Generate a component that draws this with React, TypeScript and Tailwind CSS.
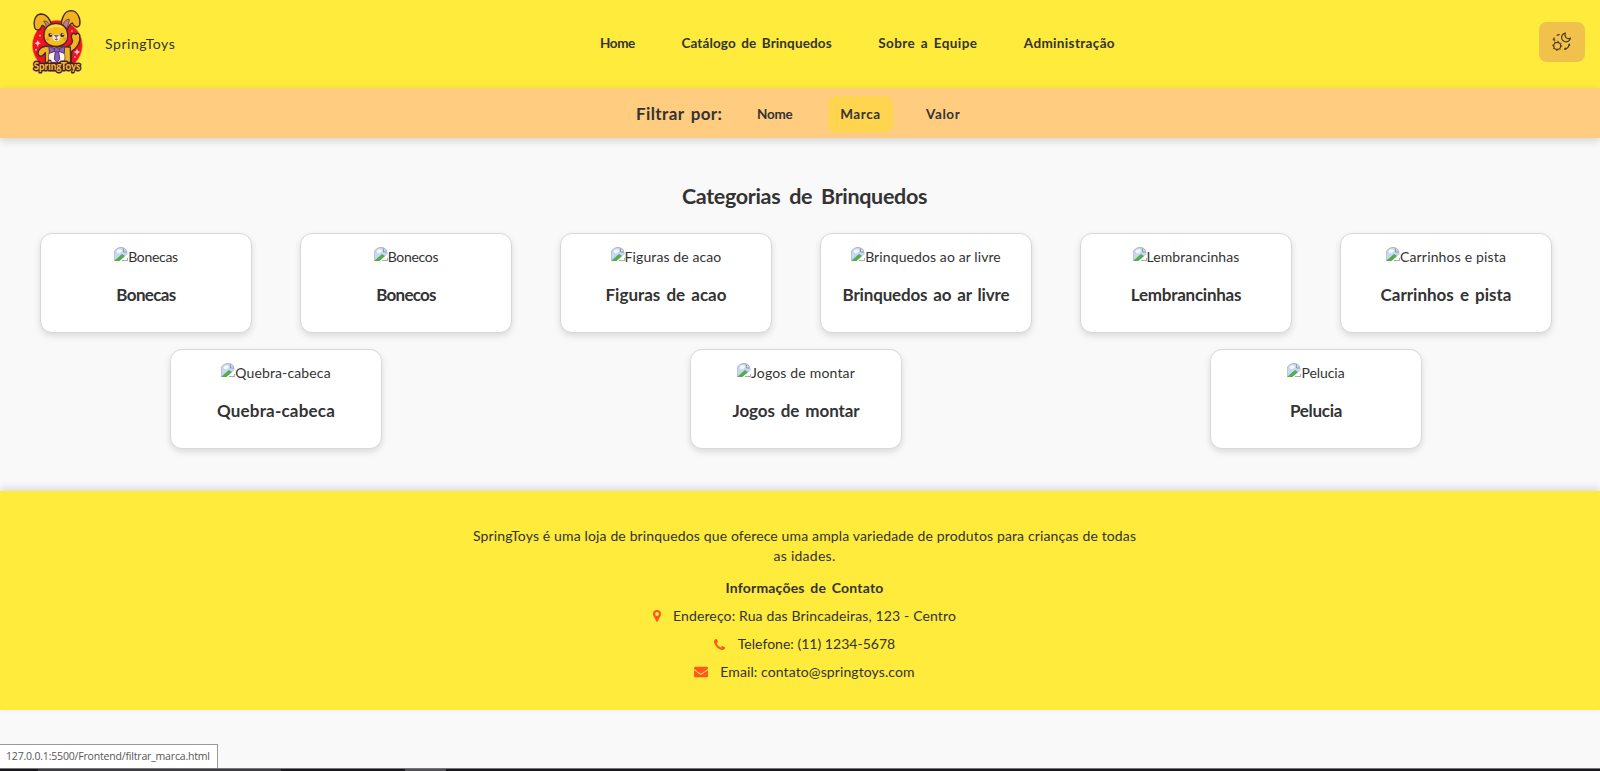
import { FaEnvelope } from "react-icons/fa";

type Item = { label: string; spacing: string };
type Category = { name: string; alt: string; title: string };

const navItems: Item[] = [
  { label: "Home", spacing: "tracking-[-0.4px]" },
  { label: "Catálogo de Brinquedos", spacing: "tracking-[0.13px]" },
  { label: "Sobre a Equipe", spacing: "tracking-[0.41px]" },
  { label: "Administração", spacing: "tracking-[0.35px]" },
];

const firstRow: Category[] = [
  { name: "Bonecas", alt: "tracking-[-0.3px]", title: "tracking-[-0.65px]" },
  { name: "Bonecos", alt: "tracking-[-0.3px]", title: "tracking-[-0.75px]" },
  { name: "Figuras de acao", alt: "tracking-[0.1px]", title: "tracking-[0px]" },
  { name: "Brinquedos ao ar livre", alt: "tracking-[0.1px]", title: "tracking-[-0.17px]" },
  { name: "Lembrancinhas", alt: "tracking-[0.08px]", title: "tracking-[-0.25px]" },
  { name: "Carrinhos e pista", alt: "tracking-[0.16px]", title: "tracking-[-0.01px]" },
];

const secondRow: Category[] = [
  { name: "Quebra-cabeca", alt: "tracking-[0.13px]", title: "tracking-[0.2px]" },
  { name: "Jogos de montar", alt: "tracking-[0.18px]", title: "tracking-[-0.1px]" },
  { name: "Pelucia", alt: "tracking-[-0.05px]", title: "tracking-[-0.3px]" },
];

function Logo() {
  return (
    <svg viewBox="90 24 162 201" className="h-[67px] w-[54px] overflow-visible" aria-hidden="true">
      <circle cx="172" cy="133" r="75" fill="#f0141e" stroke="#e9a11f" strokeWidth="2" />
      <g fill="#ffd0d0">
        <path d="M113 117l3 7 7 3-7 3-3 7-3-7-7-3 7-3z" />
        <path d="M231 143l3 7 7 3-7 3-3 7-3-7-7-3 7-3z" />
        <circle cx="120" cy="104" r="2.5" />
        <circle cx="108" cy="146" r="2.5" />
        <circle cx="216" cy="90" r="2.5" />
        <circle cx="225" cy="168" r="2.5" />
      </g>
      <g stroke="#4a2630" strokeWidth="4" strokeLinejoin="round">
        <path d="M156 80C153 55 140 39 122 39C105 41 99 62 104 80C109 91 121 88 124 78C126 69 132 73 140 88z" fill="#f0b31c" />
        <path d="M184 78C183 52 193 30 212 29C233 29 243 53 239 72C234 83 221 77 217 66C210 67 206 76 201 88z" fill="#f0b31c" />
        <path d="M131 60C142 58 149 68 151 80L141 86C139 76 137 68 131 60z" fill="#b68098" strokeWidth="2" />
        <path d="M189 76C190 64 197 54 208 55C209 61 204 68 201 82z" fill="#b68098" strokeWidth="2" />
        <path d="M204 136C217 131 220 121 215 111C211 99 222 93 227 101C232 93 241 98 239 107C243 121 232 141 215 151L214 184L203 184z" fill="#f4b519" />
        <path d="M146 137C128 132 113 145 114 159C119 172 132 163 136 155L136 184L212 184L211 138z" fill="#f0b31c" />
        <path d="M151 151C143 160 144 174 150 184L190 184C199 171 194 157 187 151z" fill="#fff5ed" strokeWidth="2" />
        <path d="M168 67C188 67 202 80 203 100C205 124 190 136 168 136C146 136 130 124 132 100C133 80 148 67 168 67z" fill="#f7bd19" />
      </g>
      <path d="M146 82C155 74 172 73 184 78" fill="none" stroke="#ffdf54" strokeWidth="6" strokeLinecap="round" />
      <g fill="#35272d">
        <circle cx="151" cy="102" r="6" />
        <circle cx="187" cy="102" r="6" />
      </g>
      <g fill="#fff">
        <circle cx="153" cy="100" r="2.5" />
        <circle cx="189" cy="100" r="2.5" />
      </g>
      <circle cx="143" cy="114" r="5" fill="#f49142" />
      <circle cx="195" cy="114" r="5" fill="#f49142" />
      <ellipse cx="169" cy="110" rx="11" ry="10" fill="#f7e9e4" />
      <path d="M163 103h12l-6 6zM169 109v6M164 114q5 6 10 0" fill="#7c7291" stroke="#514457" strokeWidth="2" />
      <g fill="#8860b5" stroke="#55346f" strokeWidth="3" strokeLinejoin="round">
        <path d="M166 144L147 136L148 157L167 150z" />
        <path d="M174 144L194 136L193 157L174 150z" />
        <path d="M166 151h10l3 24-8 9-8-9z" />
        <rect x="163" y="140" width="15" height="13" rx="4" />
      </g>
      <text
        x="171"
        y="208"
        textAnchor="middle"
        textLength="140"
        lengthAdjust="spacingAndGlyphs"
        fontFamily="Lato, sans-serif"
        fontWeight="900"
        fontSize="35"
        fill="#f5b932"
        stroke="#43222e"
        strokeWidth="9"
        strokeLinejoin="round"
        paintOrder="stroke"
      >
        SpringToys
      </text>
    </svg>
  );
}

function ThemeIcon() {
  return (
    <svg viewBox="0 0 20 20" className="size-5" fill="none" stroke="#4d3b17" strokeLinecap="round" strokeLinejoin="round" aria-hidden="true">
      <circle cx="5.2" cy="13.9" r="3.5" strokeWidth="1.3" />
      <circle cx="5.2" cy="13.9" r="4.6" strokeWidth="1" strokeDasharray="0.5 3.11" />
      <path d="M13.4 1C10.6 1.6 9 4 9.7 6.6C10.6 9.6 14 10.6 16.6 9C17.7 8.2 18.4 7.2 18.5 6C16.4 7.2 14.2 6.6 13.4 4.8C12.8 3.5 12.8 2.2 13.4 1z" strokeWidth="1.2" />
      <path d="M2 7V6M2.6 8.2l-1.2-.6M5.2 3.2L7.2 2.6" strokeWidth="1.3" />
      <path d="M17.4 12.2C17 14.6 15.4 16.6 12.6 17.2M16.6 13l.8-.8.2 1M13.4 16.2l-.9 1 1.1.2" strokeWidth="1.2" />
    </svg>
  );
}

function BrokenImage() {
  return (
    <svg viewBox="0 0 14 14" className="h-[14px] w-[14px] shrink-0" aria-hidden="true">
      <path d="M0 14V6Q1 1 7 0Q11 0 13 4L14 7V14z" fill="#c6d8f4" />
      <path d="M2.5 4Q4 1.5 7 2.5Q9 4 6 6Q3 7 2.5 4z" fill="#f5f9ff" />
      <path d="M0 14L8 7L11 9L6 14z" fill="#54ad48" />
      <path d="M5.5 14L14 7V14z" fill="#fff" />
      <path d="M0 14V6Q1 1 7 .4Q11 .4 13 4" fill="none" stroke="#a8adb5" strokeWidth=".8" />
      <path d="M9.5 1.5V5H13M13.6 11V13.6H8" fill="none" stroke="#858b93" strokeWidth=".8" />
    </svg>
  );
}

function MapPin() {
  return (
    <svg viewBox="0 0 8 12" className="h-3 w-2" aria-hidden="true">
      <path fillRule="evenodd" d="M4 0A4 4 0 0 1 8 4C8 5.2 7.3 6.3 6.8 7.3L4.6 11.6Q4 12.3 3.4 11.6L1.2 7.3C.7 6.3 0 5.2 0 4A4 4 0 0 1 4 0zM4 2.1A1.9 1.9 0 1 0 4 5.9A1.9 1.9 0 1 0 4 2.1z" fill="#ff5722" />
    </svg>
  );
}

function Handset() {
  return (
    <svg viewBox="0 0 1408 1408" className="size-[11px]" aria-hidden="true">
      <path
        fill="#ff5722"
        d="M1408 1112q0 27-10 70.5t-21 68.5q-21 50-122 106-94 51-186 51-27 0-53-3.5t-57.5-12.5-47-14.5-55.5-20.5-49-18q-98-35-175-83-127-79-264-216t-216-264q-48-77-83-175-3-9-18-49t-20.5-55.5-14.5-47-12.5-57.5-3.5-53q0-92 51-186 56-101 106-122 25-11 68.5-21t70.5-10q14 0 21 3 18 6 53 76 11 19 30 54t35 63.5 31 53.5q3 4 17.5 25t21.5 35.5 7 28.5q0 20-28.5 50t-62 55-62 53-28.5 46q0 9 5 22.5t8.5 20.5 14 24 11.5 19q76 137 174 235t235 174q2 1 19 11.5t24 14 20.5 8.5 22.5 5q18 0 46-28.5t53-62 55-62 50-28.5q14 0 28.5 7t35.5 21.5 25 17.5q25 15 53.5 31t63.5 35 54 30q70 35 76 53 3 7 3 21z"
      />
    </svg>
  );
}

function CategoryCard({ name, alt, title }: Category) {
  return (
    <article className="flex h-[100px] w-[212px] flex-col items-center rounded-xl border border-[#d8d8d8] bg-white pt-[13px] shadow-[0_3px_6px_rgba(0,0,0,0.12)]">
      <div className="flex h-5 items-start">
        <BrokenImage />
        <span className={`whitespace-nowrap text-sm leading-5 ${alt}`}>{name}</span>
      </div>
      <h3 className={`mt-4 whitespace-nowrap text-[17px] leading-6 font-bold [word-spacing:2px] ${title}`}>{name}</h3>
    </article>
  );
}

export default function App() {
  return (
    <div className="flex h-[771px] w-full flex-col overflow-hidden bg-[#f9f9f9] font-[Lato,'Liberation_Sans',sans-serif] text-[#333]">
      <header className="flex h-[88px] shrink-0 items-center bg-[#ffeb3b] pr-[15px] pb-1 pl-[30px]">
        <div className="flex w-[570px] items-center gap-[21px]">
          <Logo />
          <span className="pt-1 text-sm tracking-[0.55px]">SpringToys</span>
        </div>
        <nav className="flex flex-1 items-center gap-[46.5px] pt-[3px] text-[13.5px] font-bold [word-spacing:2px]">
          {navItems.map((item) => (
            <a key={item.label} className={`whitespace-nowrap ${item.spacing}`}>
              {item.label}
            </a>
          ))}
        </nav>
        <button className="flex h-10 w-[46px] items-center justify-center rounded-lg bg-[#f0c14b]">
          <ThemeIcon />
        </button>
      </header>

      <div className="z-10 flex h-[50px] shrink-0 items-center bg-[#ffcc80] pt-[2px] pl-[636px] text-[13.5px] font-bold shadow-[0_3px_8px_rgba(0,0,0,0.15)]">
        <span className="w-[109px] text-[17px] tracking-[0.4px] [word-spacing:2px]">Filtrar por:</span>
        <a className="w-[83px] pl-3 tracking-[-0.25px]">Nome</a>
        <a className="flex h-9 w-[65px] items-center justify-center rounded-lg bg-[#ffd54f] tracking-[0.6px]">Marca</a>
        <a className="pl-[33px] tracking-[0.6px]">Valor</a>
      </div>

      <main className="flex h-[353px] shrink-0 flex-col pt-[42px] pr-6 pl-4">
        <h2 className="pl-[17px] text-center text-[21.5px] leading-8 font-bold tracking-[-0.34px] [word-spacing:4px]">Categorias de Brinquedos</h2>
        <div className="mt-[21px] flex justify-around">
          {firstRow.map((category) => (
            <CategoryCard key={category.name} {...category} />
          ))}
        </div>
        <div className="mt-4 flex justify-around">
          {secondRow.map((category) => (
            <CategoryCard key={category.name} {...category} />
          ))}
        </div>
      </main>

      <footer className="flex h-[219px] shrink-0 flex-col items-center bg-[#ffeb3b] pt-[35px] pl-[9px] text-sm leading-5 shadow-[0_-3px_8px_rgba(0,0,0,0.13)]">
        <p className="text-center whitespace-nowrap">
          <span className="tracking-[0.14px]">SpringToys é uma loja de brinquedos que oferece uma ampla variedade de produtos para crianças de todas</span>
          <br />
          <span className="tracking-[0.27px]">as idades.</span>
        </p>
        <h4 className="mt-3 font-bold tracking-[0.2px] [word-spacing:2px]">Informações de Contato</h4>
        <ul className="mt-2 flex flex-col items-center gap-2">
          <li className="flex items-center gap-3">
            <MapPin />
            <span className="tracking-[0.14px]">Endereço: Rua das Brincadeiras, 123 - Centro</span>
          </li>
          <li className="flex items-center gap-[13px]">
            <Handset />
            <span className="tracking-[0.02px]">Telefone: (11) 1234-5678</span>
          </li>
          <li className="flex items-center gap-3">
            <FaEnvelope className="size-[14px] text-[#ff5722]" />
            <span className="tracking-[0.1px]">Email: contato@springtoys.com</span>
          </li>
        </ul>
      </footer>

      <div className="flex min-h-0 flex-1 items-end">
        <div className="flex h-6 w-[218px] items-center border-t border-r border-[#9b9b9b] bg-white pt-px pl-[6px] font-['Open_Sans',sans-serif] text-[10.5px] tracking-[-0.18px] whitespace-nowrap text-[#555]">
          127.0.0.1:5500/Frontend/filtrar_marca.html
        </div>
      </div>
      <div className="flex h-[3px] shrink-0 border-t border-[#77777a] bg-[#17161b]">
        <div className="ml-[38px] w-[243px] bg-[#3b3b3f]" />
        <div className="ml-[124px] w-[41px] bg-[#505055]" />
      </div>
    </div>
  );
}
